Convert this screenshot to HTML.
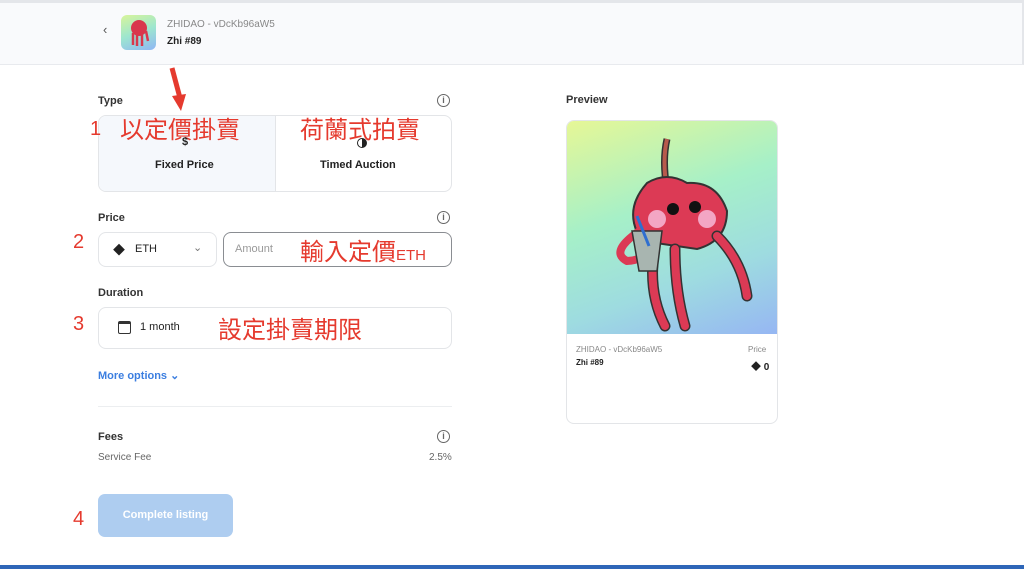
<!DOCTYPE html>
<html><head><meta charset="utf-8">
<style>
*{margin:0;padding:0;box-sizing:border-box}
body{width:1024px;height:569px;overflow:hidden;background:#fff;font-family:"Liberation Sans","Noto Sans CJK TC",sans-serif;position:relative;color:#222}
.abs{position:absolute}
.hdr{left:0;top:0;width:1024px;height:65px;background:#f9fafc;border-bottom:1px solid #e8eaee;border-top:3px solid #e4e6ea;border-right:2px solid #e4e6ea}
.lbl{font-size:11px;font-weight:bold;color:#333}
.info{width:13px;height:13px;border:1.3px solid #666;border-radius:50%;font-size:9px;text-align:center;line-height:11px;color:#666;font-weight:bold}
.box{border:1px solid #e3e5e8;border-radius:8px;background:#fff}
.red{color:#e53a2e;font-size:24px;font-family:"Noto Sans CJK TC","Liberation Sans",sans-serif;line-height:1}
.num{color:#e53a2e;font-size:20px}
</style></head><body>
<div class="abs hdr"></div>
<div class="abs" style="left:103px;top:22px;font-size:13px;color:#555">‹</div>
<div class="abs" style="left:121px;top:15px;width:35px;height:35px;border-radius:6px;background:linear-gradient(160deg,#d9f59a,#9de6cf,#8fb6f4);overflow:hidden">
<svg width="35" height="35" viewBox="0 0 35 35"><circle cx="18" cy="13" r="8" fill="#d9374c"/><path d="M12 18v12M16 20v11M21 20v11M25 16l2 10" stroke="#d9374c" stroke-width="2.5" fill="none"/></svg></div>
<div class="abs" style="left:167px;top:19px;font-size:10px;color:#888">ZHIDAO - vDcKb96aW5</div>
<div class="abs" style="left:167px;top:36px;font-size:10px;font-weight:bold">Zhi #89</div>

<svg class="abs" style="left:160px;top:66px" width="30" height="50"><path d="M12 2 L20 32" stroke="#e53a2e" stroke-width="5"/><path d="M12 30 L26 28 L21 45 Z" fill="#e53a2e"/></svg>

<div class="abs lbl" style="left:98px;top:95px">Type</div>
<div class="abs info" style="left:437px;top:94px">i</div>
<div class="abs box" style="left:98px;top:115px;width:354px;height:77px;overflow:hidden">
<div class="abs" style="left:0;top:0;width:177px;height:77px;background:#f5f8fc;border-right:1px solid #e3e5e8"></div>
</div>
<div class="abs num" style="left:90px;top:118px">1</div>
<div class="abs red" style="left:120px;top:116px">以定價掛賣</div>
<div class="abs red" style="left:300px;top:116px">荷蘭式拍賣</div>
<div class="abs" style="left:182px;top:136px;font-size:11px;font-weight:bold">$</div>
<div class="abs" style="left:357px;top:138px;width:10px;height:10px;border:1.5px solid #222;border-radius:50%;background:linear-gradient(90deg,#fff 50%,#222 50%)"></div>
<div class="abs" style="left:155px;top:159px;font-size:11px;font-weight:bold">Fixed Price</div>
<div class="abs" style="left:320px;top:159px;font-size:11px;font-weight:bold">Timed Auction</div>

<div class="abs lbl" style="left:98px;top:212px">Price</div>
<div class="abs info" style="left:437px;top:211px">i</div>
<div class="abs num" style="left:73px;top:231px">2</div>
<div class="abs box" style="left:98px;top:232px;width:119px;height:35px"></div>
<div class="abs" style="left:113px;top:241px;font-size:12px">◆</div>
<div class="abs" style="left:135px;top:243px;font-size:11px">ETH</div>
<div class="abs" style="left:193px;top:241px;font-size:11px;color:#777">⌄</div>
<div class="abs" style="left:223px;top:232px;width:229px;height:35px;border:1.5px solid #8a8d92;border-radius:8px"></div>
<div class="abs" style="left:235px;top:243px;font-size:11px;color:#999">Amount</div>
<div class="abs red" style="left:300px;top:238px">輸入定價<span style="font-size:15px;font-family:'Liberation Sans'">ETH</span></div>

<div class="abs lbl" style="left:98px;top:287px">Duration</div>
<div class="abs num" style="left:73px;top:313px">3</div>
<div class="abs box" style="left:98px;top:307px;width:354px;height:42px"></div>
<div class="abs" style="left:118px;top:321px;width:13px;height:13px;border:1.5px solid #333;border-top-width:3px;border-radius:2px"></div>
<div class="abs" style="left:140px;top:321px;font-size:11px">1 month</div>
<div class="abs red" style="left:218px;top:316px">設定掛賣期限</div>

<div class="abs" style="left:98px;top:369px;font-size:11px;font-weight:bold;color:#3b7ee0">More options ⌄</div>
<div class="abs" style="left:98px;top:406px;width:354px;border-top:1px solid #eceef0"></div>
<div class="abs lbl" style="left:98px;top:431px">Fees</div>
<div class="abs info" style="left:437px;top:430px">i</div>
<div class="abs" style="left:98px;top:452px;font-size:10px;color:#666">Service Fee</div>
<div class="abs" style="left:429px;top:452px;font-size:10px;color:#666">2.5%</div>

<div class="abs num" style="left:73px;top:508px">4</div>
<div class="abs" style="left:98px;top:494px;width:135px;height:43px;border-radius:7px;background:#aecdf0;color:#fff;font-size:11px;font-weight:bold;text-align:center;line-height:43px">Complete listing</div>

<div class="abs lbl" style="left:566px;top:94px">Preview</div>
<div class="abs box" style="left:566px;top:120px;width:212px;height:304px;overflow:hidden">
<div class="abs" style="left:0;top:0;width:212px;height:213px;background:linear-gradient(160deg,#e6f796 0%,#a6f0c8 40%,#9edce0 70%,#96b6f3 100%)">
<svg width="212" height="213" viewBox="0 0 212 213">
<path d="M100 68 Q95 40 100 18" stroke="#333" stroke-width="7" fill="none"/><path d="M100 68 Q95 40 100 18" stroke="#b75a4c" stroke-width="4" fill="none"/>
<path d="M75 120 Q55 90 80 62 Q100 50 120 62 Q150 60 160 90 Q160 120 130 128 Z" fill="#dc3a55" stroke="#333" stroke-width="2"/>
<circle cx="90" cy="98" r="9" fill="#f3a6c4"/><circle cx="140" cy="98" r="9" fill="#f3a6c4"/>
<circle cx="106" cy="88" r="6" fill="#111"/><circle cx="128" cy="86" r="6" fill="#111"/>
<path d="M88 125 Q80 170 98 205 M108 128 Q108 170 118 205 M150 115 Q175 140 180 175" stroke="#333" stroke-width="11" fill="none" stroke-linecap="round"/>
<path d="M88 125 Q80 170 98 205 M108 128 Q108 170 118 205 M150 115 Q175 140 180 175" stroke="#dc3a55" stroke-width="8" fill="none" stroke-linecap="round"/>
<path d="M80 105 Q40 130 60 140 Q75 140 90 125" stroke="#dc3a55" stroke-width="8" fill="none"/>
<path d="M65 110 L72 150 L90 150 L95 110 Z" fill="#a8b5b0" stroke="#333" stroke-width="1.5"/>
<path d="M70 95 L82 125" stroke="#2f6fd0" stroke-width="3"/>
</svg></div>
<div class="abs" style="left:9px;top:224px;font-size:8px;color:#888">ZHIDAO - vDcKb96aW5</div>
<div class="abs" style="left:9px;top:237px;font-size:8px;font-weight:bold">Zhi #89</div>
<div class="abs" style="left:181px;top:224px;font-size:8px;color:#888">Price</div>
<div class="abs" style="left:184px;top:237px;font-size:10px;font-weight:bold">◆ 0</div>
</div>

<div class="abs" style="left:0;top:565px;width:1024px;height:4px;background:#2e66b8"></div>
</body></html>
